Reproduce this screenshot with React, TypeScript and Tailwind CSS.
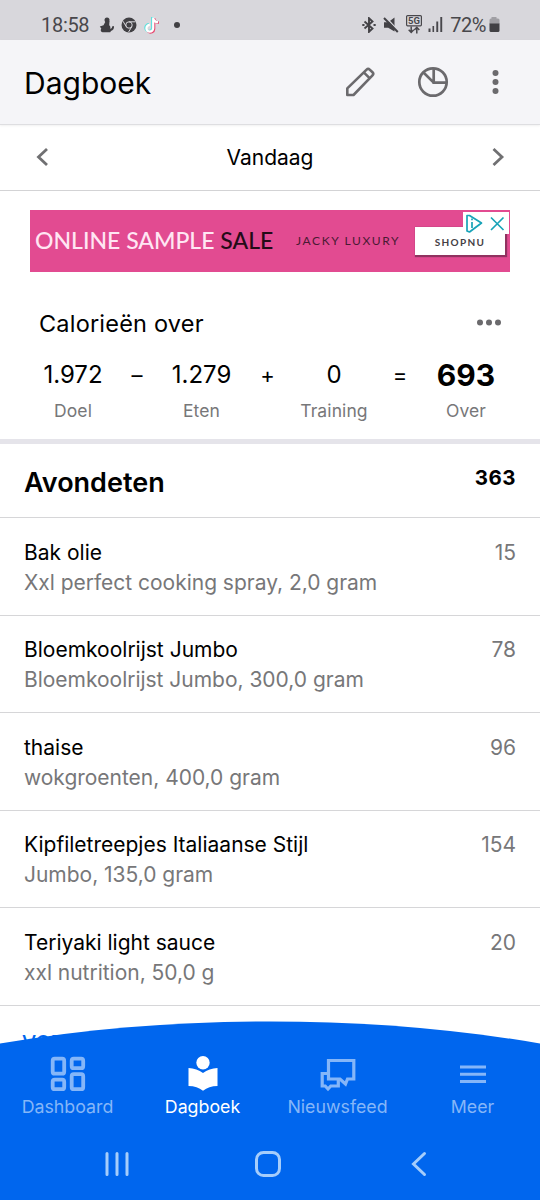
import type { ReactNode } from "react";

type Entry = { name: string; detail: string; kcal: number };

const entries: Entry[] = [
  { name: "Bak olie", detail: "Xxl perfect cooking spray, 2,0 gram", kcal: 15 },
  { name: "Bloemkoolrijst Jumbo", detail: "Bloemkoolrijst Jumbo, 300,0 gram", kcal: 78 },
  { name: "thaise", detail: "wokgroenten, 400,0 gram", kcal: 96 },
  { name: "Kipfiletreepjes Italiaanse Stijl", detail: "Jumbo, 135,0 gram", kcal: 154 },
  { name: "Teriyaki light sauce", detail: "xxl nutrition, 50,0 g", kcal: 20 },
];

export default function App() {
  return (
    <div className="relative flex h-[1200px] w-[540px] flex-col overflow-hidden bg-white font-['Inter',sans-serif] text-black">
      <StatusBar />
      <AppBar />
      <DateNav />
      <AdBanner />
      <CalorieSummary />
      <Meal />
      <BottomNav />
    </div>
  );
}

function StatusBar() {
  return (
    <div className="flex h-10 shrink-0 items-center bg-[#d8d7dc] pt-[9px] pl-[41px] font-['Roboto',sans-serif] text-[20px] leading-none text-[#48474b]">
      <span className="w-[49px] tracking-[-0.3px]">18:58</span>
      <svg className="ml-[9px] h-4 w-4" viewBox="0 0 16 16" fill="#3f3e42">
        <circle cx="8" cy="3" r="2.500" />
        <path d="M6.500 4.500 10.500 4l-.3 4.200c1.300 1 1.500 2.300.8 3.600 1.500-.1 2.200-.9 2-2.300l1.900-.5c.5 2.600-.8 4.500-2.900 4.900l-.8 1.300H3.500C1.700 14.600 1.200 13 2.300 11.400L.8 9.500l3.700-1.200z" />
      </svg>
      <svg className="ml-[6px] h-4 w-4" viewBox="0 0 16 16">
        <circle cx="8" cy="8" r="7.500" fill="#414044" />
        <g fill="none" stroke="#d8d7dc" strokeWidth="1">
          <circle cx="8" cy="8" r="3.200" />
          <path d="M8 4.800h6.500M5.200 9.600 2 4.200M10.800 9.600 7.600 15" />
        </g>
      </svg>
      <svg className="ml-[6px] h-[18px] w-[18px]" viewBox="0 0 18 18" fill="none" strokeWidth="2.600">
        <path d="M9.300 1v10.800a3.400 3.400 0 1 1-3.400-3.400M9.300 1.500c.3 2.500 2 4 4.700 4.200" stroke="#5ee0dc" />
        <path d="M11 2v10.800a3.400 3.400 0 0 1-5.800 2.600M11 2.500c.3 2.500 2 4 4.900 4.200" stroke="#e8476f" />
        <path d="M10.200 1.500v10.800a3.400 3.400 0 1 1-3.400-3.400M10.200 2c.3 2.500 2 4 4.800 4.200" stroke="#fff" strokeWidth="2.200" />
      </svg>
      <span className="ml-[13px] h-1.5 w-1.5 rounded-full bg-[#414044]" />
      <div className="ml-auto flex items-center pr-[40px]">
        <svg className="h-4 w-[14px]" viewBox="0 0 14 16" fill="none" stroke="#434246" strokeWidth="1.900">
          <path d="m2.500 4.500 8 7L7 14.800V1.200l3.500 3.300-8 7" />
          <path d="M.3 8h2.200M11.500 8h2.200" strokeWidth="2" />
        </svg>
        <svg className="ml-[7px] h-4 w-4" viewBox="0 0 16 16">
          <path d="M1 5.300h4.200L11.500.500v14L5.200 10.700H1z" fill="#434246" />
          <path d="m2.600 0 13 14" stroke="#d8d7dc" strokeWidth="1.400" />
          <path d="m1 1 13.800 14" stroke="#434246" strokeWidth="2" />
        </svg>
        <svg className="ml-[7px] h-[19px] w-4" viewBox="0 0 16 19">
          <rect x=".6" y=".6" width="14.800" height="10.200" rx="1" fill="none" stroke="#48474b" strokeWidth="1.200" />
          <text x="8" y="9.200" textAnchor="middle" fontSize="9.500" fontWeight="700" fill="#48474b">5G</text>
          <path d="M5.200 11.500v6M2.700 14.800l2.500 2.700 2.500-2.700M10.800 18.500v-6M8.300 15l2.500-2.700 2.500 2.700" fill="none" stroke="#48474b" strokeWidth="1.500" />
        </svg>
        <svg className="ml-[6px] h-[15px] w-[15px]" viewBox="0 0 15 15" fill="#48474b">
          <path d="M.5 11.500h2V15h-2zM4.500 9h1.600v6H4.500zM8.300 4.500h1.900V15H8.300zM12.300 0h1.900v15h-1.900z" />
        </svg>
        <span className="ml-[7px] tracking-[-0.5px]">72%</span>
        <svg className="ml-[3px] h-[15px] w-[11px]" viewBox="0 0 11 15">
          <path d="M2.500 0h5v1.500H9A1.500 1.500 0 0 1 10.500 3v4H.5V3A1.500 1.500 0 0 1 2 1.500h.5z" fill="#a09fa4" />
          <path d="M.5 6.500h10v7A1.500 1.500 0 0 1 9 15H2a1.500 1.500 0 0 1-1.500-1.500z" fill="#414044" />
        </svg>
      </div>
    </div>
  );
}

function AppBar() {
  return (
    <div className="flex h-[85px] shrink-0 items-center border-b border-[#dedee1] bg-[#f5f5f8] pl-6 shadow-[0_1px_2px_rgba(0,0,0,0.06)]">
      <h1 className="pt-px text-[30px] leading-9">Dagboek</h1>
      <div className="ml-auto flex items-center pr-[41.500px] text-[#6b6a6d]">
        <svg className="h-[30px] w-[30px]" viewBox="0 0 30 30" fill="none" stroke="currentColor" strokeWidth="2.600" strokeLinejoin="round">
          <path d="M2.300 28v-6.600L21.600 2.600a2.200 2.200 0 0 1 3.100 0l2.800 2.700a2.200 2.200 0 0 1 0 3.100L8.500 28zM18.800 5.400l6 6" />
        </svg>
        <svg className="ml-[42px] h-8 w-8" viewBox="0 0 32 32" fill="none" stroke="currentColor" strokeWidth="2.700">
          <circle cx="16" cy="16" r="13.700" />
          <path d="M16.700 2.500v14.100h13M16.700 16.600 6.500 6.500" />
        </svg>
        <svg className="ml-[43px] h-[26px] w-[7px]" viewBox="0 0 7 26" fill="currentColor">
          <circle cx="3.500" cy="4" r="3" />
          <circle cx="3.500" cy="13" r="3" />
          <circle cx="3.500" cy="22" r="3" />
        </svg>
      </div>
    </div>
  );
}

function DateNav() {
  return (
    <div className="flex h-[66px] shrink-0 items-center justify-between border-b border-[#d3d3d5] px-[35px] text-[#707072]">
      <svg className="mb-0.5 h-5 w-[14px]" viewBox="0 0 14 20" fill="none" stroke="currentColor" strokeWidth="2.800">
        <path d="M12 2 3.500 10l8.500 8" />
      </svg>
      <span className="text-[21px] text-black">Vandaag</span>
      <svg className="mb-0.5 h-5 w-[14px]" viewBox="0 0 14 20" fill="none" stroke="currentColor" strokeWidth="2.800">
        <path d="m2.500 2 8.500 8-8.500 8" />
      </svg>
    </div>
  );
}

function AdBanner() {
  return (
    <div className="relative mt-[19px] ml-[30px] flex h-[62px] w-[480px] shrink-0 items-center bg-[#e24b91] font-['Lato',sans-serif]">
      <span className="mb-px ml-[5px] w-[261px] text-[23px] font-medium whitespace-nowrap text-[#ffe6f3]">
        ONLINE SAMPLE <span className="text-[#240b17]">SALE</span>
      </span>
      <span className="w-[119px] text-[12px] tracking-[1.600px] whitespace-nowrap text-[#4a1a33]">JACKY LUXURY</span>
      <span className="flex h-7 w-[90px] items-center justify-center bg-white pt-[3px] text-[10px] font-bold tracking-[1.300px] text-[#454045] shadow-[1px_1px_1px_1px_rgba(110,40,75,0.7)]">
        SHOPNU
      </span>
      <svg className="absolute top-[2px] right-[1px] h-[22px] w-[46px] bg-white" viewBox="0 0 46 22" fill="none" stroke="#18a3b8" strokeWidth="1.700">
        <path d="M4 3.500v15.500l2.500 1L18.500 11 6.500 3.500z" strokeLinejoin="round" />
        <path d="M9 10v6M9 6.500v1.800" />
        <path d="m28 5.500 12.500 12.500M40.500 5.500 28 18" />
      </svg>
    </div>
  );
}

function CalorieSummary() {
  return (
    <section className="flex h-[172px] shrink-0 flex-col border-b-[5px] border-[#e5e4ea] pt-[35px]">
      <div className="flex items-center justify-between pr-[38px] pl-[39px]">
        <h2 className="text-[23.500px] leading-[34px] tracking-[0.2px]">Calorieën over</h2>
        <svg className="mb-[3px] h-[7px] w-[26px]" viewBox="0 0 26 7" fill="#6b6a6d">
          <circle cx="4" cy="3.500" r="3" />
          <circle cx="13" cy="3.500" r="3" />
          <circle cx="22" cy="3.500" r="3" />
        </svg>
      </div>
      <div className="mt-[16px] grid grid-cols-[76px_52px_77px_55px_78px_54px_78px] pl-[35px] text-center">
        <Figure label="Doel">1.972</Figure>
        <Operator>–</Operator>
        <Figure label="Eten">1.279</Figure>
        <Operator>+</Operator>
        <Figure label="Training">0</Figure>
        <Operator>=</Operator>
        <Figure label="Over">
          <strong className="text-[30px] font-bold">693</strong>
        </Figure>
      </div>
    </section>
  );
}

function Figure({ label, children }: { label: string; children: ReactNode }) {
  return (
    <div className="flex flex-col items-center">
      <div className="h-[36px] text-[24px] leading-[36px]">{children}</div>
      <div className="mt-[6px] text-[17.500px] leading-6 tracking-[0.1px] text-[#777779]">{label}</div>
    </div>
  );
}

function Operator({ children }: { children: ReactNode }) {
  return <div className="text-[22px] leading-[37px]">{children}</div>;
}

function Meal() {
  return (
    <section className="flex flex-col">
      <div className="flex h-[74px] justify-between border-b border-[#d6d6d8] px-6">
        <h2 className="pt-[21px] text-[27px] leading-9 font-semibold">Avondeten</h2>
        <span className="pt-[19px] text-[20.500px] leading-[30px] font-bold tracking-[0.5px]">363</span>
      </div>
      {entries.map((entry) => (
        <EntryRow key={entry.name} {...entry} />
      ))}
      <div className="pt-[22px] pl-[22px] text-[20px] leading-[30px] font-medium text-[#0066ee]">VOEDINGSMIDDEL TOEVOEGEN</div>
    </section>
  );
}

function EntryRow({ name, detail, kcal }: Entry) {
  return (
    <div className="flex h-[97.600px] justify-between border-b border-[#d6d6d8] px-6 pt-[19.500px] text-[21px] leading-[30px]">
      <div>
        <div>{name}</div>
        <div className="tracking-[-0.02px] text-[#777779]">{detail}</div>
      </div>
      <div className="text-[#777779]">{kcal}</div>
    </div>
  );
}

function BottomNav() {
  return (
    <nav className="absolute inset-x-0 bottom-0 flex h-[179px] flex-col">
      {/* arched top edge */}
      <svg className="absolute inset-0 h-[179px] w-[540px]" viewBox="0 0 540 179" fill="#0066ee">
        <path d="M0 22.500C90 7 180 .4 270 .4S450 7 540 22.500V179H0z" />
      </svg>
      <div className="relative grid grid-cols-4 pt-[35px] text-[#85b6f8]">
        <Tab label="Dashboard">
          <svg className="h-9 w-9" viewBox="0 0 36 36" fill="none" stroke="currentColor" strokeWidth="3.800">
            <rect x="2.700" y="2.700" width="11.500" height="15" rx="2" />
            <rect x="21.700" y="2.700" width="11.500" height="9.500" rx="2" />
            <rect x="2.700" y="23.700" width="11.500" height="9.500" rx="2" />
            <rect x="21.700" y="18.200" width="11.500" height="15" rx="2" />
          </svg>
        </Tab>
        <Tab label="Dagboek" active>
          <svg className="h-9 w-9" viewBox="0 0 36 36" fill="currentColor">
            <circle cx="18" cy="6.800" r="6.700" />
            <path d="M3.500 12c5.500.4 10.500 2 14.500 5 4-3 9-4.600 14.500-5v18c-6 .2-10.500 1.500-14.500 4.800-4-3.300-8.500-4.600-14.500-4.800z" />
          </svg>
        </Tab>
        <Tab label="Nieuwsfeed">
          <svg className="h-9 w-9" viewBox="0 0 36 36" fill="none" stroke="currentColor" strokeWidth="3.200">
            <path d="M8.500 4.500h25.300V23h-6.300l-2 5-5.500-5H8.500z" />
            <path d="M8.500 17.500H2.200V30h3l2.800 3 2.800-3h7.500v-7" />
          </svg>
        </Tab>
        <Tab label="Meer">
          <svg className="h-9 w-9" viewBox="0 0 36 36" stroke="currentColor" strokeWidth="3">
            <path d="M5 11h26M5 18.200h26M5 25.500h26" />
          </svg>
        </Tab>
      </div>
      <div className="relative mt-8 flex items-center pl-[103px] text-[#a5cdfb]">
        <svg className="h-7 w-7" viewBox="0 0 28 28" stroke="currentColor" strokeWidth="3" strokeLinecap="round">
          <path d="M4 3.500v21M14 3.500v21M24 3.500v21" />
        </svg>
        <svg className="ml-[123px] h-7 w-7" viewBox="0 0 28 28" fill="none" stroke="currentColor" strokeWidth="3">
          <rect x="2.500" y="2.500" width="23" height="23" rx="7" />
        </svg>
        <svg className="ml-[124px] h-7 w-7" viewBox="0 0 28 28" fill="none" stroke="currentColor" strokeWidth="3" strokeLinecap="round">
          <path d="M18.500 3.500 7.500 14l11 10.500" />
        </svg>
      </div>
    </nav>
  );
}

function Tab({ label, active, children }: { label: string; active?: boolean; children: ReactNode }) {
  return (
    <div className={active ? "flex flex-col items-center text-white" : "flex flex-col items-center"}>
      {children}
      <span className="mt-1 text-[17.800px] leading-[22px]">{label}</span>
    </div>
  );
}
